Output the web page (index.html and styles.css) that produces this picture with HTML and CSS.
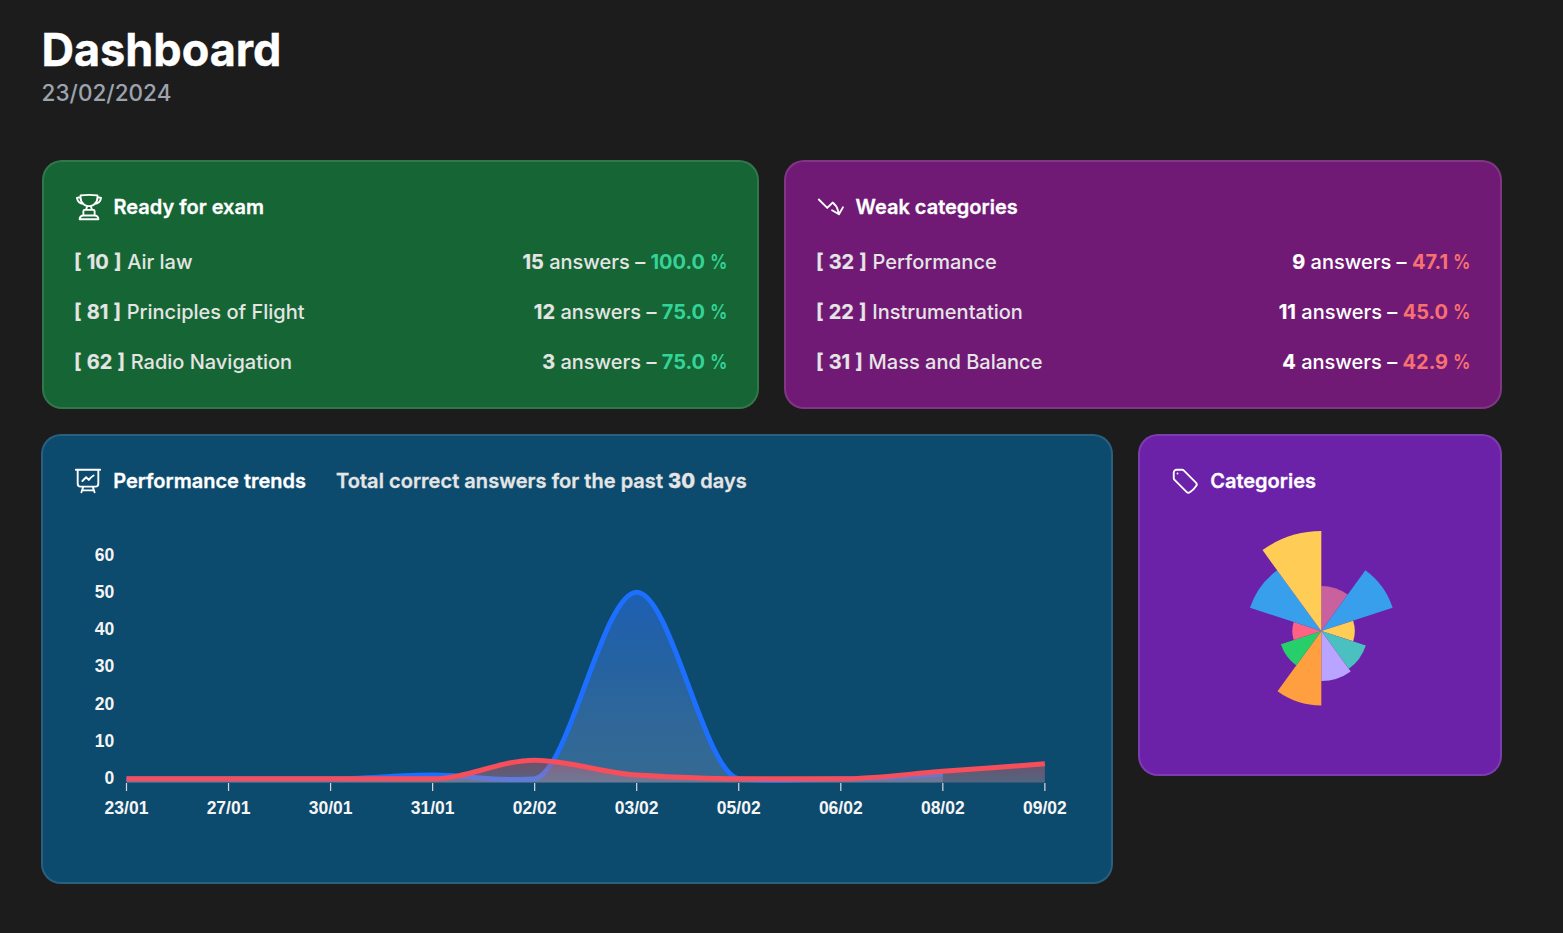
FILE: index.html
```html
<!DOCTYPE html>
<html lang="en">
<head>
<meta charset="utf-8">
<title>Dashboard</title>
<link rel="stylesheet" href="styles.css">
</head>
<body>
<main class="page">
  <header class="page-head">
    <h1 class="title">Dashboard</h1>
    <p class="date">23/02/2024</p>
  </header>
  <div class="row row-top">
    <section class="card card-green">
      <h2 class="card-head">
        <svg class="icon" viewBox="0 0 24 24"><path d="M16.5 18.75h-9m9 0a3 3 0 0 1 3 3h-15a3 3 0 0 1 3-3m9 0v-3.375c0-.621-.503-1.125-1.125-1.125h-.871M7.5 18.75v-3.375c0-.621.504-1.125 1.125-1.125h.872m5.007 0H9.497m5.007 0a7.454 7.454 0 0 1-.982-3.172M9.497 14.25a7.454 7.454 0 0 0 .981-3.172M5.25 4.236c-.982.143-1.954.317-2.916.52A6.003 6.003 0 0 0 7.73 9.728M5.25 4.236V4.5c0 2.108.966 3.99 2.48 5.228M5.25 4.236V2.721C7.456 2.41 9.71 2.25 12 2.25c2.291 0 4.545.16 6.75.47v1.516M7.73 9.728a6.726 6.726 0 0 0 2.748 1.35m8.272-6.842V4.5c0 2.108-.966 3.99-2.48 5.228m2.48-5.492a46.32 46.32 0 0 1 2.916.52 6.003 6.003 0 0 1-5.395 4.972m0 0a6.726 6.726 0 0 1-2.749 1.35m0 0a6.772 6.772 0 0 1-3.044 0"/></svg>
        <span>Ready for exam</span>
      </h2>
      <ul class="list">
        <li><span class="subject"><b>[ 10 ]</b> Air law</span><span class="score"><b>15</b> answers – <em>100.0 <i>%</i></em></span></li>
        <li><span class="subject"><b>[ 81 ]</b> Principles of Flight</span><span class="score"><b>12</b> answers – <em>75.0 <i>%</i></em></span></li>
        <li><span class="subject"><b>[ 62 ]</b> Radio Navigation</span><span class="score"><b>3</b> answers – <em>75.0 <i>%</i></em></span></li>
      </ul>
    </section>
    <section class="card card-fuchsia">
      <h2 class="card-head">
        <svg class="icon" viewBox="0 0 24 24"><path d="M2.25 6 9 12.75l4.286-4.286a11.948 11.948 0 0 1 4.306 6.43l.776 2.898m0 0 3.182-5.511m-3.182 5.51-5.511-3.181"/></svg>
        <span>Weak categories</span>
      </h2>
      <ul class="list">
        <li><span class="subject"><b>[ 32 ]</b> Performance</span><span class="score"><b>9</b> answers – <em>47.1 <i>%</i></em></span></li>
        <li><span class="subject"><b>[ 22 ]</b> Instrumentation</span><span class="score"><b>11</b> answers – <em>45.0 <i>%</i></em></span></li>
        <li><span class="subject"><b>[ 31 ]</b> Mass and Balance</span><span class="score"><b>4</b> answers – <em>42.9 <i>%</i></em></span></li>
      </ul>
    </section>
  </div>
  <div class="row row-bottom">
    <section class="card card-blue">
      <h2 class="card-head">
        <svg class="icon" viewBox="0 0 24 24"><path d="M3.75 3v11.25A2.25 2.25 0 0 0 6 16.5h2.25M3.75 3h-1.5m1.5 0h16.5m0 0h1.5m-1.5 0v11.25A2.25 2.25 0 0 1 18 16.5h-2.25m-7.5 0h7.5m-7.5 0-1 3m8.5-3 1 3m0 0 .5 1.5m-.5-1.5h-9.5m0 0-.5 1.5m.75-9 3-3 2.148 2.148A12.061 12.061 0 0 1 16.5 7.605"/></svg>
        <span>Performance trends</span>
        <span class="note">Total correct answers for the past <b>30</b> days</span>
      </h2>
      <svg class="trend" viewBox="73 520 1008 332">
        <defs>
          <linearGradient id="blueFill" gradientUnits="userSpaceOnUse" x1="0" y1="554" x2="0" y2="782">
            <stop offset="0" stop-color="#1d6bff" stop-opacity=".55"/>
            <stop offset=".5" stop-color="#4a84e6" stop-opacity=".42"/>
            <stop offset="1" stop-color="#8eafe0" stop-opacity=".31"/>
          </linearGradient>
          <linearGradient id="redFill" gradientUnits="userSpaceOnUse" x1="0" y1="760" x2="0" y2="782">
            <stop offset="0" stop-color="#f8505b" stop-opacity=".43"/>
            <stop offset="1" stop-color="#dc96a0" stop-opacity=".34"/>
          </linearGradient>
        </defs>
        <g id="series"></g>
        <g id="axis"></g>
      </svg>
    </section>
    <section class="card card-purple">
      <h2 class="card-head">
        <svg class="icon" viewBox="0 0 24 24"><path d="M9.568 3H5.25A2.25 2.25 0 0 0 3 5.25v4.318c0 .597.237 1.17.659 1.591l9.581 9.581c.699.699 1.78.872 2.607.33a18.095 18.095 0 0 0 5.223-5.223c.542-.827.369-1.908-.33-2.607L11.16 3.66A2.25 2.25 0 0 0 9.568 3Z"/><path d="M6 6h.008v.008H6V6Z"/></svg>
        <span>Categories</span>
      </h2>
      <svg class="polar" viewBox="1170 520 300 224"><g id="polar"></g></svg>
    </section>
  </div>
</main>
<script src="charts.js"></script>
</body>
</html>
```
FILE: styles.css
```css
* { box-sizing: border-box; margin: 0; padding: 0; }

body {
  background: #1c1c1c;
  color: #fff;
  font-family: Inter, sans-serif;
  font-size: 20px;
  line-height: 30px;
}

.page { padding: 25px 61px 0 41px; height: 933px; overflow: hidden; }
.page-head { height: 135px; padding-left: 0.5px; }
.title { font-size: 45px; line-height: 50px; font-weight: 700; letter-spacing: 0; -webkit-text-stroke: 0.4px; }
.date { font-size: 22.5px; line-height: 35px; font-weight: 500; color: #9ca3af; letter-spacing: 0.03px; }

.row { display: grid; gap: 25px; align-items: start; }
.row-top { grid-template-columns: 717px 718px; margin-left: 1px; }
.row-bottom { grid-template-columns: 1072px 364px; margin-top: 25px; }

.card { border: 2px solid rgba(255, 255, 255, 0.12); border-radius: 20px; padding: 30px; }
.card-green { background: #166534; }
.card-fuchsia { background: #701a75; }
.card-blue { background: #0c4a6e; }
.card-purple { background: #6b21a8; }

.card-head { display: flex; align-items: center; height: 30px; font-size: 20px; font-weight: 600; white-space: nowrap; -webkit-text-stroke: 0.3px; }
.icon { width: 30px; height: 30px; margin-right: 9.5px; fill: none; stroke: #fff; stroke-width: 1.5; stroke-linecap: round; stroke-linejoin: round; }
.row-bottom .icon { margin-right: 10.2px; }
.note { margin-left: 30px; color: #e5e5e5; letter-spacing: 0.04px; }
.note b { font-weight: 800; }

.list { list-style: none; display: grid; gap: 20px; margin-top: 25px; font-weight: 500; }
.list li { display: flex; justify-content: space-between; white-space: nowrap; }
.subject { color: #e5e5e5; }
.list b { font-weight: 700; -webkit-text-stroke: 0.2px; }
.subject b { word-spacing: 0.4px; margin-right: 0.4px; }
.list em { font-style: normal; font-weight: 700; }
.list i { display: inline-block; width: 17.2px; font-style: normal; font-weight: 600; transform: scaleX(0.87); transform-origin: left; }
.card-green .score { color: #e5e5e5; }
.card-green em { color: #34d399; }
.card-fuchsia em { color: #f87171; }

.trend { display: block; width: 1008px; height: 332px; margin-top: 24px; }
.polar { display: block; width: 300px; height: 224px; margin-top: 24px; }
.tick-label { font: 700 17.5px "Liberation Sans", Arial, sans-serif; fill: #f4f4f5; }
.tick { stroke: #d4d4d8; stroke-width: 1.25; }
.line { fill: none; stroke-width: 5; }
```
FILE: charts.js
```js
const NS = "http://www.w3.org/2000/svg";
const add = (parent, tag, attrs, text) => {
  const el = document.createElementNS(NS, tag);
  for (const k in attrs) el.setAttribute(k, attrs[k]);
  if (text !== undefined) el.textContent = text;
  parent.appendChild(el);
};

const ZERO = 778.8, UNIT = 3.733, BOTTOM = 782.5, X0 = 126.5, STEP = 102.04;
const labels = ["23/01", "27/01", "30/01", "31/01", "02/02", "03/02", "05/02", "06/02", "08/02", "09/02"];

// Monotone cubic through the values; slopes overrides the tangent (px per px) at a point.
function curve(values, slopes) {
  const p = values.map((v, i) => [X0 + i * STEP, ZERO - v * UNIT]);
  const slope = i => {
    if (slopes[i] !== undefined) return slopes[i];
    if (i === 0) return (p[1][1] - p[0][1]) / STEP;
    if (i === p.length - 1) return (p[i][1] - p[i - 1][1]) / STEP;
    const a = (p[i][1] - p[i - 1][1]) / STEP, b = (p[i + 1][1] - p[i][1]) / STEP;
    return a * b <= 0 ? 0 : 2 * a * b / (a + b);
  };
  const h = STEP / 3;
  const clamp = y => Math.min(y, BOTTOM - 0.4);
  let d = `M${p[0]}`;
  for (let i = 1; i < p.length; i++) {
    const [ax, ay] = p[i - 1], [bx, by] = p[i];
    d += `C${ax + h} ${clamp(ay + h * slope(i - 1))} ${bx - h} ${clamp(by - h * slope(i))} ${bx} ${by}`;
  }
  return d;
}

const series = document.getElementById("series");
for (const s of [
  { v: [0, 0, 0, 1, 0, 50, 0, 0, 1.2], slopes: { 4: -0.15, 6: 0.15 }, color: "#1d6fff", fill: "url(#blueFill)" },
  { v: [0, 0, 0, 0, 5, 1, 0, 0, 2, 4], slopes: {}, color: "#f64f5b", fill: "url(#redFill)" }
]) {
  const d = curve(s.v, s.slopes);
  add(series, "path", { d: `${d}V${BOTTOM}H${X0}Z`, fill: s.fill });
  add(series, "path", { d, class: "line", stroke: s.color });
}

const axis = document.getElementById("axis");
labels.forEach((t, i) => {
  const x = X0 + i * STEP;
  add(axis, "line", { x1: x, x2: x, y1: 783, y2: 791, class: "tick" });
  add(axis, "text", { x, y: 814, "text-anchor": "middle", class: "tick-label" }, t);
});
for (let v = 0; v <= 60; v += 10)
  add(axis, "text", { x: 114.3, y: 784 - v * 3.72, "text-anchor": "end", class: "tick-label" }, v);

const polar = document.getElementById("polar");
const slices = [[45, "#c9619e"], [75, "#389fec"], [33.5, "#ffcd56"], [46.8, "#4bc0c0"], [50, "#b9a5ff"],
  [74.5, "#ff9f40"], [42.5, "#27cf6b"], [29, "#ff6384"], [75, "#389fec"], [100, "#ffcd56"]];
slices.forEach(([r, fill], i) => {
  const pt = k => { const a = k * Math.PI / 5; return `${1321.3 + r * Math.sin(a)} ${631 - r * Math.cos(a)}`; };
  add(polar, "path", { d: `M1321.3 631L${pt(i)}A${r} ${r} 0 0 1 ${pt(i + 1)}Z`, fill });
});
```
